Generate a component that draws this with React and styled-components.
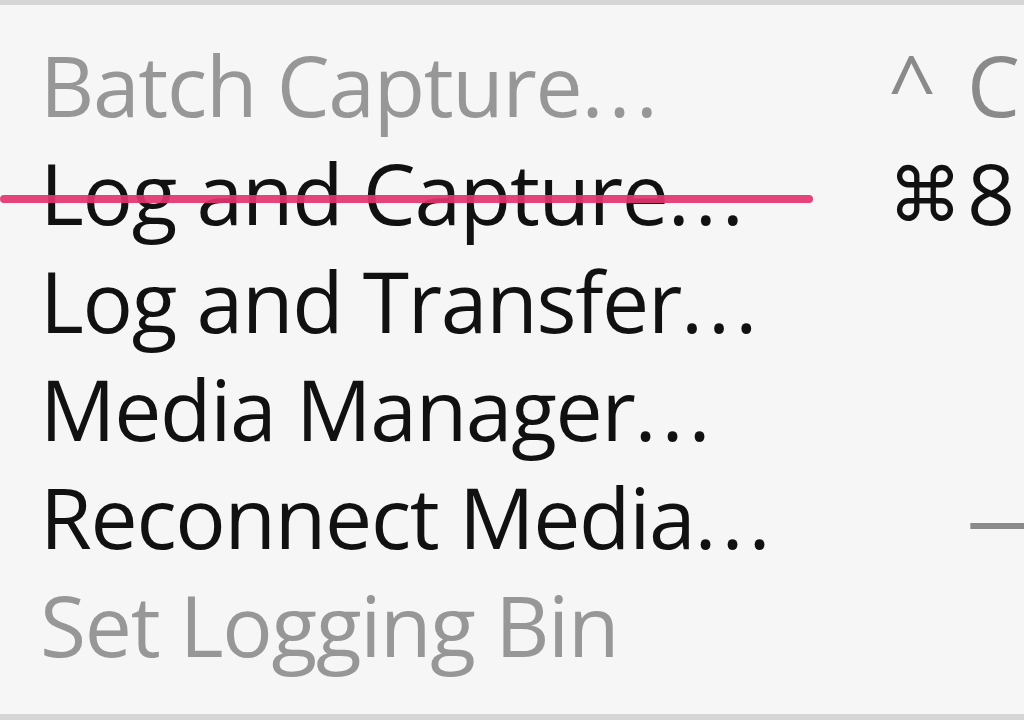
import React from "react";
import styled, { createGlobalStyle } from "styled-components";

const Global = createGlobalStyle`
  html, body {
    margin: 0;
    padding: 0;
    background: #f6f6f6;
  }
  body {
    width: 1024px;
    height: 720px;
    overflow: hidden;
  }
`;

const Menu = styled.div`
  box-sizing: border-box;
  width: 1024px;
  height: 720px;
  background: #f6f6f6;
  border-top: 5px solid #d6d6d6;
  border-bottom: 6px solid #d6d6d6;
  padding: 26px 0 0 40px;
  font-family: "Open Sans", "DejaVu Sans", sans-serif;
  font-size: 84px;
  line-height: 108px;
  letter-spacing: -1.3px;
  overflow: hidden;
`;

const Row = styled.div`
  display: grid;
  grid-template-columns: 848px 79px 1fr;
  white-space: nowrap;
  color: ${(p) => (p.disabled ? "#979797" : "#111")};
  position: relative;
`;

const Label = styled.span``;

const Dots = styled.span`
  letter-spacing: 5px;
`;

const Key = styled.span`
  color: ${(p) => (p.dim ? "#8a8a8a" : "#111")};
  font-size: ${(p) => (p.small ? "74px" : "84px")};
`;

const Strike = styled.div`
  position: absolute;
  left: -40px;
  top: 56px;
  width: 813px;
  height: 8px;
  border-radius: 4px;
  background: rgba(226, 52, 110, 0.92);
`;

const items = [
  { label: "Batch Capture", dots: true, mod: "^", key: "C", disabled: true, dim: true },
  { label: "Log and Capture", dots: true, mod: "⌘", key: "8", struck: true, small: true },
  { label: "Log and Transfer", dots: true },
  { label: "Media Manager", dots: true },
  { label: "Reconnect Media", dots: true, key: "—", dim: true },
  { label: "Set Logging Bin", disabled: true },
];

export default function App() {
  return (
    <>
      <Global />
      <Menu>
        {items.map((it) => (
          <Row key={it.label} disabled={it.disabled}>
            <Label>
              {it.label}
              {it.dots && <Dots>...</Dots>}
            </Label>
            <Key dim={it.dim} small={it.small}>{it.mod}</Key>
            <Key dim={it.dim}>{it.key}</Key>
            {it.struck && <Strike />}
          </Row>
        ))}
      </Menu>
    </>
  );
}
